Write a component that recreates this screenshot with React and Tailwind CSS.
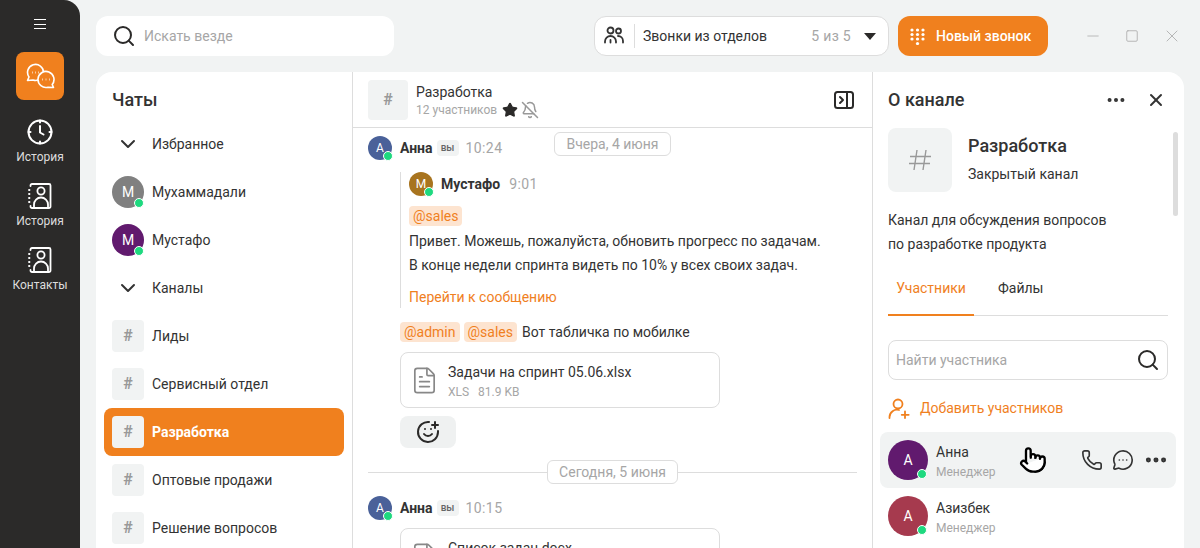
import { BellOff, ChevronDown, Ellipsis, FileText, MessageCircleMore, Minus, Phone, Pointer, Search, SmilePlus, Square, Star, X } from "lucide-react";

function Avatar({ letter, color, size = "w-8 h-8", text = "text-sm", dot = "right-0 bottom-0" }) {
  return (
    <div className={`relative shrink-0 rounded-full flex items-center justify-center text-white ${size} ${text} ${color}`}>
      {letter}
      <span className={`absolute w-[10px] h-[10px] rounded-full bg-[#1ed97f] border border-white ${dot}`}></span>
    </div>
  );
}

function HashBox() {
  return (
    <div className="w-8 h-8 shrink-0 rounded flex items-center justify-center text-base font-bold text-[#999] bg-[#f1f3f3]">#</div>
  );
}

function ClockIcon() {
  return (
    <svg width="26" height="26" viewBox="0 0 26 26" fill="none" stroke="white" strokeWidth="2" strokeLinecap="round" strokeLinejoin="round">
      <circle cx="13" cy="13" r="11.5" />
      <path d="M13 7v6.5l3.5 2" />
      <path d="M13 1.5v2M13 22.5v2M1.5 13h2M22.5 13h2" />
    </svg>
  );
}

function BookIcon() {
  return (
    <svg width="24" height="26" viewBox="0 0 24 26" fill="none" stroke="white" strokeWidth="1.8" strokeLinecap="round" strokeLinejoin="round">
      <path d="M2.5 3V2.500a1.500 1.500 0 0 1 1.500-1.500h17a1.500 1.500 0 0 1 1.500 1.500v21a1.500 1.500 0 0 1-1.500 1.500H4a1.500 1.500 0 0 1-1.500-1.500V23" />
      <circle cx="13" cy="8" r="3.600" />
      <path d="M6 25v-3.500a6.500 6.500 0 0 1 14 0V25" />
      <path d="M1 7h.5M1 11h.5M1 15h.5M1 19h.5" />
    </svg>
  );
}

function LogoIcon() {
  return (
    <svg width="30" height="26" viewBox="0 0 30 26" fill="none" stroke="white" strokeWidth="1.600" strokeLinecap="round" strokeLinejoin="round">
      <path d="M2.500 17.500L4 14A8 8 0 1 1 8 17Z" />
      <path d="M28.500 24.500L27.200 21.500A8 8 0 1 0 23 24.200Z" fill="#f0801e" />
      <path d="M7 9.500h.6M10.200 9.500h.6M13.400 9.500h.6M17.400 16.500h.6M20.700 16.500h.6M24 16.500h.6" strokeWidth="1.800" strokeLinecap="butt" />
    </svg>
  );
}

function DialIcon() {
  const dots = [[2, 2], [7.500, 2], [13, 2], [2, 6.500], [7.500, 6.500], [13, 6.500], [2, 11], [7.500, 11], [13, 11], [7.500, 15.500]];
  return (
    <svg width="15" height="17" viewBox="0 0 15 17" fill="white">
      {dots.map(([x, y]) => <circle key={`${x}-${y}`} cx={x} cy={y} r="1.600" />)}
    </svg>
  );
}

function PanelIcon() {
  return (
    <svg width="20" height="18" viewBox="0 0 20 18" fill="none" stroke="#2b2a29" strokeWidth="2" strokeLinecap="round" strokeLinejoin="round">
      <rect x="1" y="1" width="18" height="16" rx="2.500" />
      <path d="M13 1v16M6 6l3 3-3 3" />
    </svg>
  );
}

function GroupIcon() {
  return (
    <svg width="20" height="20" viewBox="0 0 20 20" fill="none" stroke="#333" strokeWidth="1.800" strokeLinecap="round" strokeLinejoin="round">
      <circle cx="6.500" cy="4.500" r="3" />
      <circle cx="14.500" cy="5" r="2.500" />
      <path d="M1 16.500v-1a5.500 5.500 0 0 1 11 0v1" />
      <path d="M14 10a5 5 0 0 1 5 5v1.500" />
      <path d="M6.500 14v2.500" />
    </svg>
  );
}

function AddUserIcon() {
  return (
    <svg width="22" height="21" viewBox="0 0 22 21" fill="none" stroke="#f0801e" strokeWidth="1.800" strokeLinecap="round" strokeLinejoin="round">
      <circle cx="10" cy="6" r="4.500" />
      <path d="M1.500 20v-1a7.500 7.500 0 0 1 9.500-7" />
      <path d="M17 13.500v6.500M13.700 16.800h7" />
    </svg>
  );
}

function BigHash() {
  return (
    <svg width="24" height="22" viewBox="0 0 24 22" fill="none" stroke="#999" strokeWidth="1.400">
      <path d="M9 1L6 21M18 1l-3 20M2 7.500h21M1 14.500h21" />
    </svg>
  );
}

function Mention({ children }) {
  return <span className="h-5 px-1 rounded bg-[#fde4d0] text-[#f0801e] text-sm leading-5">{children}</span>;
}

function MessageHead({ name, time, color, you }) {
  return (
    <div className="flex items-center h-6">
      <Avatar letter={name[0]} color={color} size="w-6 h-6" text="text-xs" dot="-right-px -bottom-px" />
      <span className="ml-2 text-sm font-bold text-[#333]">{name}</span>
      {you && <span className="ml-1 w-[22px] h-4 rounded-sm bg-[#f1f3f3] text-[10px] leading-4 font-medium text-center text-[#666]">вы</span>}
      <span className={`text-sm tracking-[0.4px] text-[#a6a6a6] ${you ? "ml-[7px]" : "ml-[9px]"}`}>{time}</span>
    </div>
  );
}

function NavItem({ icon, label }) {
  return (
    <div className="h-16 flex flex-col items-center pt-[3px]">
      {icon}
      <span className="mt-1 text-xs leading-4 text-[#ddd]">{label}</span>
    </div>
  );
}

function ChatRow({ children, active }) {
  return (
    <div className={`h-12 flex items-center gap-2 px-2 rounded-lg text-sm ${active ? "bg-[#f0801e] text-white font-bold" : "text-[#333]"}`}>
      {children}
    </div>
  );
}

function Member({ name, color, hover }) {
  return (
    <div className={`relative h-14 -mx-2 px-2 flex items-center gap-2 rounded-lg ${hover ? "bg-[#f1f3f3]" : ""}`}>
      <Avatar letter="А" color={color} size="w-10 h-10" text="text-sm" dot="right-px bottom-px" />
      <div className="mt-1">
        <div className="text-sm leading-5 text-[#333]">{name}</div>
        <div className="text-xs leading-5 text-[#a6a6a6]">Менеджер</div>
      </div>
      {hover && (
        <>
          <div className="ml-auto -mr-px flex items-center gap-[9px] text-[#333]">
            <Phone size={22} strokeWidth={1.800} />
            <MessageCircleMore size={22} strokeWidth={1.800} />
            <Ellipsis size={26} strokeWidth={2.600} />
          </div>
          <Pointer size={28} strokeWidth={2} className="absolute left-[139px] top-[14px] text-black fill-white" />
        </>
      )}
    </div>
  );
}

function FileCard({ name, meta }) {
  return (
    <div className="w-80 h-14 shrink-0 rounded-lg border border-[#ddd] flex items-center pl-[9px] gap-[9px]">
      <FileText size={29} strokeWidth={1.400} className="text-[#888]" />
      <div className="mt-[2px]">
        <div className="text-sm leading-5 text-[#333]">{name}</div>
        <div className="mt-[2px] text-xs leading-4 text-[#a6a6a6] whitespace-pre">{meta}</div>
      </div>
    </div>
  );
}

export default function App() {
  return (
    <div className="h-screen overflow-hidden flex bg-[#f1f3f3] font-['Roboto',sans-serif]">
      <aside className="w-20 shrink-0 bg-[#2b2a29] rounded-tr-2xl flex flex-col items-center">
        <div className="h-[52px] pt-[19px] flex flex-col gap-[3.5px]">
          <span className="w-3 h-px bg-white"></span>
          <span className="w-3 h-px bg-white"></span>
          <span className="w-3 h-px bg-white"></span>
        </div>
        <div className="w-12 h-12 rounded-lg bg-[#f0801e] flex items-center justify-center"><LogoIcon /></div>
        <div className="mt-4 w-full">
          <NavItem icon={<ClockIcon />} label="История" />
          <NavItem icon={<BookIcon />} label="История" />
          <NavItem icon={<BookIcon />} label="Контакты" />
        </div>
      </aside>

      <div className="flex-1 min-w-0 pl-4 pr-4 pt-4 flex flex-col gap-4">
        <header className="h-10 shrink-0 flex items-center">
          <div className="w-[298px] h-10 rounded-xl bg-white flex items-center pl-4 gap-2">
            <Search size={24} strokeWidth={2} className="text-[#2b2a29]" />
            <span className="text-sm text-[#a6a6a6]">Искать везде</span>
          </div>
          <div className="ml-[200px] w-[295px] h-10 rounded-xl bg-white border border-[#ddd] flex items-center pl-[9px] pr-3 text-sm">
            <GroupIcon />
            <span className="ml-[10px] w-px h-6 bg-[#ddd]"></span>
            <span className="ml-2 text-[#333]">Звонки из отделов</span>
            <span className="ml-auto tracking-[0.3px] text-[#a6a6a6]">5 из 5</span>
            <span className="ml-[13px] w-0 h-0 border-x-[6px] border-x-transparent border-t-[7px] border-t-[#2b2a29]"></span>
          </div>
          <div className="ml-[9px] w-[150px] h-10 rounded-xl bg-[#f0801e] flex items-center pl-3 gap-[11px] text-sm font-medium text-white">
            <DialIcon />
            Новый звонок
          </div>
          <div className="ml-auto mr-[2px] flex items-center gap-[23px] text-[#aaa]">
            <Minus size={18} strokeWidth={1} />
            <Square size={14} strokeWidth={1.400} />
            <X size={20} strokeWidth={1} />
          </div>
        </header>

        <main className="flex-1 min-h-0 flex bg-white rounded-t-2xl overflow-hidden">
          <section className="w-[257px] shrink-0 border-r border-[#ddd] px-2">
            <h2 className="pl-2 pt-4 pb-2 text-lg leading-6 font-medium text-[#333]">Чаты</h2>
            <ChatRow><ChevronDown size={24} strokeWidth={2} className="mx-1 text-[#333]" />Избранное</ChatRow>
            <ChatRow><Avatar letter="М" color="bg-[#808080]" />Мухаммадали</ChatRow>
            <ChatRow><Avatar letter="М" color="bg-[#611a6e]" />Мустафо</ChatRow>
            <ChatRow><ChevronDown size={24} strokeWidth={2} className="mx-1 text-[#333]" />Каналы</ChatRow>
            <ChatRow><HashBox />Лиды</ChatRow>
            <ChatRow><HashBox />Сервисный отдел</ChatRow>
            <ChatRow active><HashBox />Разработка</ChatRow>
            <ChatRow><HashBox />Оптовые продажи</ChatRow>
            <ChatRow><HashBox />Решение вопросов</ChatRow>
          </section>

          <section className="w-[520px] shrink-0 border-r border-[#ddd] flex flex-col">
            <div className="h-14 shrink-0 border-b border-[#ddd] flex items-center pl-[15px] pr-[18px]">
              <div className="w-10 h-10 rounded bg-[#f1f3f3] flex items-center justify-center text-base font-bold text-[#999]">#</div>
              <div className="ml-2">
                <div className="text-sm leading-[22px] text-[#333]">Разработка</div>
                <div className="-mt-[2px] flex items-center text-xs leading-4 text-[#a6a6a6]">
                  12 участников
                  <Star size={16} className="ml-[5px] text-[#2b2a29] fill-[#2b2a29]" />
                  <BellOff size={18} strokeWidth={2} className="ml-[3px] text-[#999]" />
                </div>
              </div>
              <div className="ml-auto"><PanelIcon /></div>
            </div>

            <div className="relative flex-1 min-h-0 overflow-hidden px-[15px] pt-2">
              <div className="absolute left-[201px] top-1 w-[117px] h-6 rounded-md border border-[#ddd] bg-white text-center text-sm leading-[22px] text-[#a6a6a6]">Вчера, 4 июня</div>
              <MessageHead name="Анна" time="10:24" color="bg-[#4a6199]" you />
              <div className="ml-8">
                <div className="mt-3 h-[136px] border-l border-[#ddd] pl-2">
                  <MessageHead name="Мустафо" time="9:01" color="bg-[#a8741f]" />
                  <div className="mt-[10px] h-5 flex"><Mention>@sales</Mention></div>
                  <p className="mt-[3px] text-sm leading-6 text-[#333]">Привет. Можешь, пожалуйста, обновить прогресс по задачам.</p>
                  <p className="text-sm leading-6 text-[#333]">В конце недели спринта видеть по 10% у всех своих задач.</p>
                  <p className="mt-2 text-sm leading-6 text-[#f0801e]">Перейти к сообщению</p>
                </div>
                <div className="mt-[14px] flex items-center gap-1 text-sm text-[#333]">
                  <Mention>@admin</Mention>
                  <Mention>@sales</Mention>
                  <span className="ml-px">Вот табличка по мобилке</span>
                </div>
                <div className="mt-[10px]"><FileCard name="Задачи на спринт 05.06.xlsx" meta="XLS   81.9 KB" /></div>
                <div className="mt-2 w-14 h-8 rounded-lg bg-[#eff1f1] flex items-center justify-center">
                  <SmilePlus size={24} strokeWidth={2} className="text-[#2b2a29]" />
                </div>
              </div>
              <div className="mt-3 h-6 flex items-center">
                <span className="flex-1 h-px bg-[#ddd]"></span>
                <span className="w-[131px] h-6 rounded-md border border-[#ddd] text-center text-sm leading-[22px] text-[#a6a6a6]">Сегодня, 5 июня</span>
                <span className="flex-1 h-px bg-[#ddd]"></span>
              </div>
              <div className="mt-3"><MessageHead name="Анна" time="10:15" color="bg-[#4a6199]" you /></div>
              <div className="mt-2 ml-8"><FileCard name="Список задач.docx" meta="DOC   24.3 KB" /></div>
            </div>
          </section>

          <section className="relative flex-1 min-w-0 px-[15px] pr-4">
            <div className="h-14 flex items-center justify-between">
              <h2 className="text-lg font-medium text-[#333]">О канале</h2>
              <div className="flex items-center gap-[19px] text-[#333]">
                <Ellipsis size={22} strokeWidth={2.400} />
                <X size={20} strokeWidth={2.400} className="mr-[2px]" />
              </div>
            </div>
            <div className="flex">
              <div className="w-16 h-16 rounded-lg bg-[#f1f3f3] flex items-center justify-center"><BigHash /></div>
              <div className="ml-4">
                <div className="mt-[6px] text-lg leading-6 font-medium text-[#333]">Разработка</div>
                <div className="mt-[4px] text-sm leading-6 text-[#333]">Закрытый канал</div>
              </div>
            </div>
            <p className="mt-4 text-sm leading-6 text-[#333]">Канал для обсуждения вопросов<br />по разработке продукта</p>
            <div className="absolute right-[6px] top-[60px] w-[5px] h-[84px] rounded-full bg-[#ddd]"></div>
            <div className="mt-[14px] h-[46px] border-b border-[#ddd] flex text-sm">
              <div className="w-[86px] h-[46px] border-b-2 border-[#f0801e] pt-[6px] text-center leading-6 text-[#f0801e]">Участники</div>
              <div className="ml-6 pt-[6px] leading-6 text-[#333]">Файлы</div>
            </div>
            <div className="mt-6 h-10 rounded-lg border border-[#ddd] flex items-center pl-[7px] pr-[7px] text-sm text-[#a6a6a6]">
              Найти участника
              <Search size={24} strokeWidth={2} className="ml-auto text-[#2b2a29]" />
            </div>
            <div className="mt-4 h-6 flex items-center gap-[10px] text-sm text-[#f0801e]">
              <AddUserIcon />
              Добавить участников
            </div>
            <div className="mt-3">
              <Member name="Анна" color="bg-[#611a6e]" hover />
              <Member name="Азизбек" color="bg-[#a63a4e]" />
            </div>
          </section>
        </main>
      </div>
    </div>
  );
}
